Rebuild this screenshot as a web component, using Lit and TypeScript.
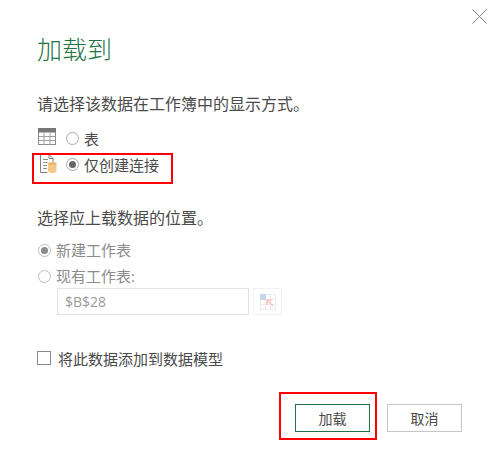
import { LitElement, html, css } from "lit";
import { customElement } from "lit/decorators.js";

@customElement("app-root")
export class AppRoot extends LitElement {
  static styles = css`
    :host { display: block; width: 499px; height: 469px; background: #fff; position: relative; overflow: hidden;
      font-family: "Open Sans", "Noto Sans CJK SC", sans-serif; font-size: 15px; color: #4a4a4a; }
    * { box-sizing: border-box; }
    .dialog { display: flex; flex-direction: column; padding: 33px 37px 0; height: 469px; }
    .close { position: absolute; left: 472px; top: 9px; width: 15px; height: 15px; }
    h1 { margin: 0; height: 32px; line-height: 32px; font-size: 25px; font-weight: 300; color: #217346; }
    .line { height: 20px; line-height: 20px; white-space: nowrap; display: flex; align-items: center; }
    .intro { margin-top: 29px; font-size: 16px; }
    .views { margin-top: 14px; display: flex; flex-direction: column; gap: 6px; }
    .row { height: 20px; display: flex; align-items: center; }
    .row svg.ic { width: 20px; height: 20px; flex: none; }
    .radio { width: 13px; height: 13px; border: 1px solid #a8a8a8; border-radius: 50%; flex: none; display: flex; align-items: center; justify-content: center; background: #fff; }
    .radio.on::after { content: ""; width: 7px; height: 7px; border-radius: 50%; background: #666; }
    .row .radio { margin-left: 9px; margin-right: 5px; }
    .place { margin-top: 34px; font-size: 16px; }
    .muted { color: #8c8c8c; }
    .targets { margin-top: 12px; display: flex; flex-direction: column; gap: 6px; }
    .targets .radio { margin-left: 1px; margin-right: 5px; border-color: #bdbdbd; }
    .targets .radio.on::after { background: #8a8a8a; }
    .refrow { display: flex; gap: 4px; margin-top: 2px; margin-left: 20px; }
    .ref { width: 192px; height: 27px; border: 1px solid #e2e2e2; padding-left: 7px; line-height: 25px; color: #9a9a9a; font-size: 14px; }
    .pick { width: 29px; height: 27px; border: 1px solid #f2f2f2; display: flex; align-items: center; justify-content: center; }
    .check { margin-top: 33px; display: flex; align-items: center; gap: 7px; height: 20px; }
    .box { width: 14px; height: 14px; border: 1px solid #8a8a8a; flex: none; }
    .actions { margin-top: 36px; margin-left: 258px; display: flex; gap: 17px; }
    button { width: 75px; height: 28px; background: #fff; font: inherit; font-size: 14px; color: #4a4a4a; padding: 0; border: 1px solid #c6c6c6; }
    button.primary { border-color: #217346; }
    .mark { position: absolute; border: 2px solid #f00; pointer-events: none; }
    .m1 { left: 32px; top: 153px; width: 141px; height: 31px; }
    .m2 { left: 279px; top: 392px; width: 98px; height: 48px; }
  `;

  render() {
    return html`
      <svg class="close" viewBox="0 0 15 15"><path d="M0.500 0.500 L14.500 14.500 M14.500 0.500 L0.500 14.500" stroke="#808080" stroke-width="1" fill="none"/></svg>
      <div class="dialog">
        <h1>加载到</h1>
        <div class="line intro">请选择该数据在工作簿中的显示方式。</div>
        <div class="views">
          <div class="row">
            <svg class="ic" viewBox="0 0 20 20">
              <rect x="1.500" y="0.500" width="17" height="16" fill="#fff" stroke="#8a8a8a"/>
              <rect x="1" y="0" width="18" height="4.500" fill="#777"/>
              <path d="M1.500 8.500H18.500M1.500 12.500H18.500M7 4.500V17M13 4.500V17" stroke="#a0a0a0" fill="none"/>
            </svg>
            <span class="radio"></span><span>表</span>
          </div>
          <div class="row">
            <svg class="ic" viewBox="0 0 20 20">
              <path d="M3.500 0.500H12L16 4.500V8M16 4.500H12V0.500M3.500 0.500V18.500H10.500" fill="#fff" stroke="#808080"/>
              <path d="M6 5.500H11M6 8.500H10.500M6 11.500H10M6 14.500H10" stroke="#909090" fill="none"/>
              <path d="M11 9.500C11 8.200 19.500 8.200 19.500 9.500V17C19.500 19.500 11 19.500 11 17Z" fill="#f3c98b"/>
              <ellipse cx="15.250" cy="9.500" rx="4.250" ry="1.200" fill="#e9b56e"/>
            </svg>
            <span class="radio on"></span><span>仅创建连接</span>
          </div>
        </div>
        <div class="line place">选择应上载数据的位置。</div>
        <div class="targets muted">
          <div class="line"><span class="radio on"></span><span>新建工作表</span></div>
          <div class="line"><span class="radio"></span><span>现有工作表:</span></div>
        </div>
        <div class="refrow">
          <div class="ref">$B$28</div>
          <div class="pick">
            <svg width="16" height="16" viewBox="0 0 16 16">
              <rect x="0.500" y="0.500" width="15" height="15" fill="#fff" stroke="#ececec"/>
              <path d="M5.500 0V16M10.500 0V16M0 5.500H16M0 10.500H16" stroke="#ececec" fill="none"/>
              <rect x="0" y="0" width="6" height="6" fill="#c6d6ec"/>
              <path d="M7 6H12M7 6V11M7 6L13 12" stroke="#f9c6bd" stroke-width="1.600" fill="none"/>
            </svg>
          </div>
        </div>
        <div class="check"><span class="box"></span><span>将此数据添加到数据模型</span></div>
        <div class="actions">
          <button class="primary">加载</button>
          <button class="cancel">取消</button>
        </div>
      </div>
      <div class="mark m1"></div>
      <div class="mark m2"></div>
    `;
  }
}
